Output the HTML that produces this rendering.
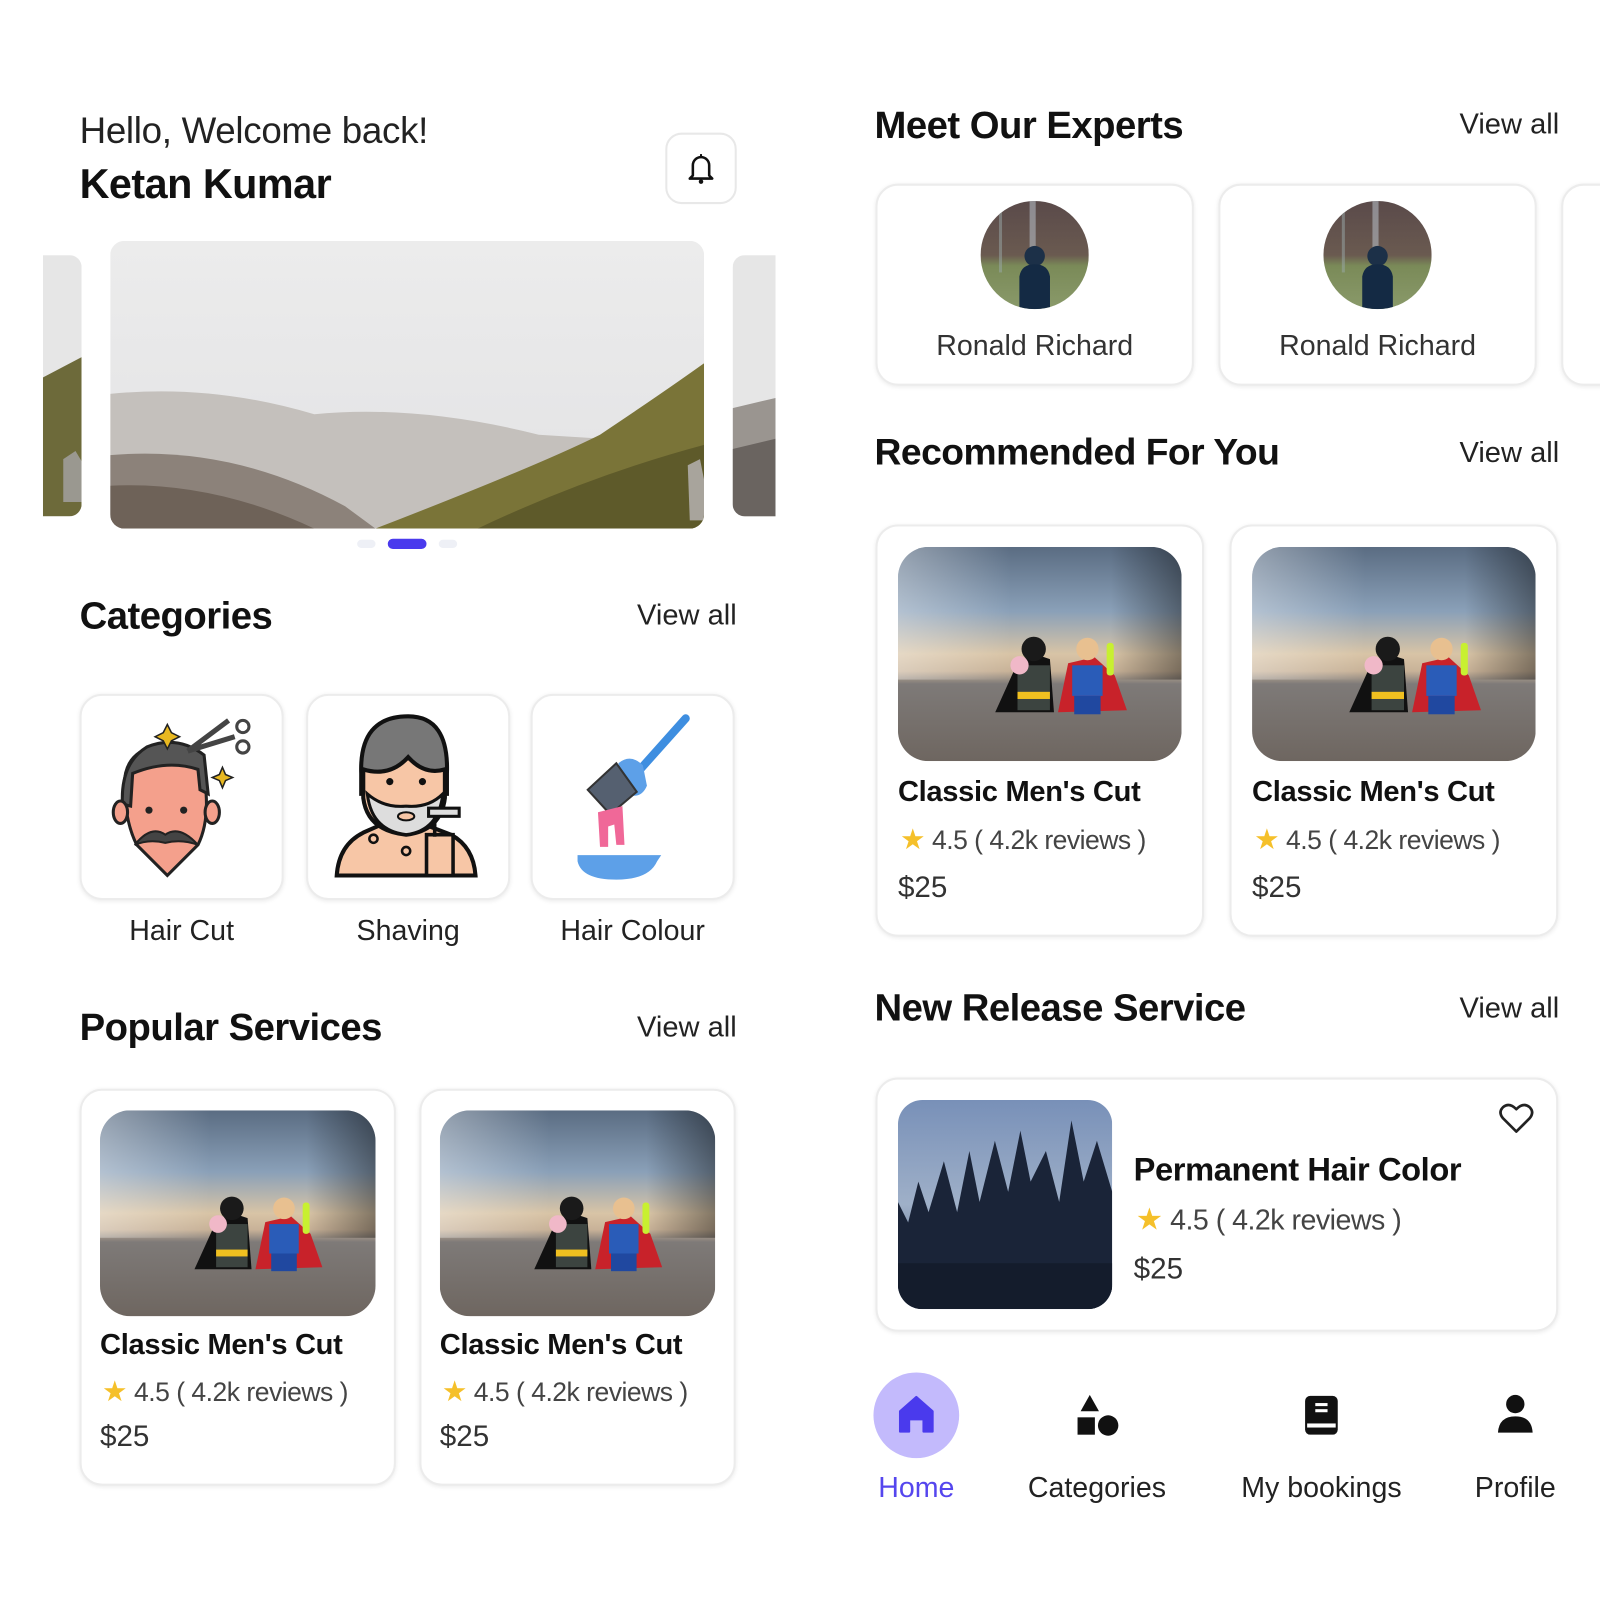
<!DOCTYPE html>
<html><head><meta charset="utf-8">
<style>
*{margin:0;padding:0;box-sizing:border-box}
html,body{width:1600px;height:1600px;background:#fff;overflow:hidden;font-family:"Liberation Sans",sans-serif;color:#111}
#w{position:absolute;left:0;top:0;width:1568px;height:1568px;transform:scale(1.0204);transform-origin:0 0}
.a{position:absolute}
.card{position:absolute;background:#fff;border:2px solid #ececec;border-radius:22px;box-shadow:0 1px 4px rgba(0,0,0,.08)}
.h{position:absolute;font-weight:bold;font-size:37.5px;letter-spacing:-0.5px;line-height:40px}
.va{position:absolute;font-size:28.5px;line-height:32px;color:#222;text-align:right}
.t{position:absolute;font-weight:bold;font-size:28.5px;line-height:32px;letter-spacing:-0.3px}
.r{position:absolute;font-size:26px;line-height:30px;color:#444;letter-spacing:-0.5px}
.r b{color:#f5c02a;font-size:28px;font-weight:normal}
.p{position:absolute;font-size:29px;line-height:32px;color:#333}
.img{position:absolute;overflow:hidden}
.img svg{width:100%;height:100%;display:block}
.lbl{position:absolute;font-size:28px;line-height:32px;text-align:center;color:#222}
</style></head><body>

<svg width="0" height="0" style="position:absolute">
<defs>
<linearGradient id="lg" x1="0" y1="0" x2="0" y2="1">
<stop offset="0" stop-color="#5a6c82"/><stop offset=".3" stop-color="#8aa0b8"/><stop offset=".5" stop-color="#d8c4a6"/><stop offset=".58" stop-color="#c8b298"/><stop offset=".64" stop-color="#7e7a78"/><stop offset="1" stop-color="#6e6660"/></linearGradient>
<linearGradient id="lh" x1="0" y1="0" x2="1" y2="0">
<stop offset="0" stop-color="#fff" stop-opacity=".35"/><stop offset=".4" stop-color="#fff" stop-opacity="0"/><stop offset=".75" stop-color="#000" stop-opacity="0"/><stop offset="1" stop-color="#000" stop-opacity=".4"/></linearGradient>
<symbol id="lego" viewBox="0 0 280 210" preserveAspectRatio="none">
<rect width="280" height="210" fill="url(#lg)"/>
<rect width="280" height="130" fill="url(#lh)"/>
<path d="M96 162 L116 118 L132 104 L150 110 L154 162Z" fill="#111"/>
<rect x="118" y="116" width="32" height="44" fill="#3c4440"/>
<rect x="118" y="142" width="32" height="7" fill="#f0c020"/>
<circle cx="134" cy="100" r="12" fill="#1a1a1a"/>
<circle cx="120" cy="116" r="9" fill="#f0b8c8"/>
<path d="M158 162 L168 114 L194 108 L214 126 L226 160Z" fill="#c8222a"/>
<rect x="172" y="116" width="30" height="30" fill="#2a5cb8"/>
<rect x="174" y="146" width="26" height="18" fill="#2048a0"/>
<circle cx="187" cy="100" r="11" fill="#e8c090"/>
<rect x="206" y="94" width="7" height="32" rx="3" fill="#c8f030"/>
</symbol>
</defs></svg>

<div id="w">
<!-- LEFT -->
<div class="a" style="left:78px;top:109px;font-size:36px;line-height:38px;color:#222;letter-spacing:-0.3px">Hello, Welcome back!</div>
<div class="a" style="left:78px;top:158px;font-size:40.5px;line-height:44px;font-weight:bold;letter-spacing:-0.5px">Ketan Kumar</div>
<div class="a" style="left:652px;top:130px;width:70px;height:70px;border:2px solid #e8e8e8;border-radius:16px"></div>
<svg class="a" style="left:671px;top:148px" width="32" height="34" viewBox="0 0 32 34"><path d="M8 24 V14 a8 8 0 0 1 16 0 V24 l3 3 H5z" fill="none" stroke="#111" stroke-width="2.5" stroke-linejoin="round"/><circle cx="16" cy="30" r="2.2" fill="#111"/><rect x="15" y="3" width="2" height="3" fill="#111"/></svg>

<div class="img" style="left:42px;top:250px;width:38px;height:256px;border-radius:0 12px 12px 0">
<svg viewBox="0 0 38 256" preserveAspectRatio="none"><rect width="38" height="256" fill="#e6e6e6"/><path d="M0 120 L38 100 V256 H0Z" fill="#6d6a3a"/><path d="M20 200 l12 -8 l6 10 v40 h-18z" fill="#9a9890"/></svg></div>
<div class="img" style="left:718px;top:250px;width:42px;height:256px;border-radius:12px 0 0 12px">
<svg viewBox="0 0 42 256" preserveAspectRatio="none"><rect width="42" height="256" fill="#e6e6e6"/><path d="M0 150 L42 140 V256 H0Z" fill="#9a9590"/><path d="M0 190 L42 180 V256 H0Z" fill="#6a6460"/></svg></div>
<div class="img" style="left:108px;top:236px;width:582px;height:282px;border-radius:14px">
<svg viewBox="0 0 582 282" preserveAspectRatio="none">
<defs><linearGradient id="sky" x1="0" y1="0" x2="0" y2="1"><stop offset="0" stop-color="#ececec"/><stop offset="1" stop-color="#e2e2e4"/></linearGradient></defs>
<rect width="582" height="282" fill="url(#sky)"/>
<path d="M0 150 Q100 140 200 170 Q300 160 420 190 L582 200 V282 H0Z" fill="#c4c0bc"/>
<path d="M0 210 Q120 200 230 260 L260 282 H0Z" fill="#8c827a"/>
<path d="M0 240 Q100 235 200 282 H0Z" fill="#6e6258"/>
<path d="M260 282 Q420 220 480 190 Q540 150 582 120 V282Z" fill="#7a7438"/>
<path d="M360 282 Q470 230 582 200 V282Z" fill="#5e5a2a"/>
<path d="M566 220 l12 -6 l4 20 v40 h-14z" fill="#a8a49c"/>
</svg></div>
<div class="a" style="left:350px;top:529px;width:18px;height:8px;border-radius:4px;background:#eef0f6"></div>
<div class="a" style="left:380px;top:528px;width:38px;height:10px;border-radius:5px;background:#4a3aed"></div>
<div class="a" style="left:430px;top:529px;width:18px;height:8px;border-radius:4px;background:#eef0f6"></div>

<div class="h" style="left:78px;top:583px">Categories</div>
<div class="va" style="right:846px;top:587px">View all</div>

<div class="card" style="left:78px;top:680px;width:200px;height:202px"></div>
<div class="card" style="left:300px;top:680px;width:200px;height:202px"></div>
<div class="card" style="left:520px;top:680px;width:200px;height:202px"></div>
<svg class="a" style="left:104px;top:698px" width="150" height="166" viewBox="0 0 150 166">
<path d="M18 70 Q18 40 50 32 Q80 28 96 50 L98 80 Q100 110 90 130 L60 160 L30 130 Q20 110 18 80Z" fill="#f4a08c" stroke="#222" stroke-width="3"/>
<path d="M16 90 Q14 50 40 34 Q70 22 96 42 L100 80 L92 76 L90 56 Q60 46 26 60 L24 92Z" fill="#555" stroke="#222" stroke-width="3"/>
<ellipse cx="14" cy="98" rx="7" ry="11" fill="#f4a08c" stroke="#222" stroke-width="3"/>
<ellipse cx="104" cy="98" rx="7" ry="11" fill="#f4a08c" stroke="#222" stroke-width="3"/>
<circle cx="42" cy="96" r="3.5" fill="#222"/><circle cx="76" cy="96" r="3.5" fill="#222"/>
<path d="M28 130 Q44 110 58 120 Q72 110 90 130 Q74 124 58 128 Q42 124 28 130Z" fill="#444" stroke="#222" stroke-width="2"/>
<path d="M80 38 L120 8 M80 38 L126 24" stroke="#444" stroke-width="5"/>
<circle cx="134" cy="14" r="6" fill="none" stroke="#444" stroke-width="3"/><circle cx="134" cy="34" r="6" fill="none" stroke="#444" stroke-width="3"/>
<path d="M60 12 l4 8 l8 4 l-8 4 l-4 8 l-4 -8 l-8 -4 l8 -4z" fill="#e8b820" stroke="#222" stroke-width="1.5"/>
<path d="M114 54 l3 7 l7 3 l-7 3 l-3 7 l-3 -7 l-7 -3 l7 -3z" fill="#e8b820" stroke="#222" stroke-width="1.5"/>
</svg>
<svg class="a" style="left:326px;top:698px" width="150" height="166" viewBox="0 0 150 166">
<path d="M4 160 Q6 130 30 118 L48 110 L90 110 L116 120 Q138 132 140 160Z" fill="#f7c6a6" stroke="#111" stroke-width="4"/>
<path d="M28 60 Q26 4 74 4 Q114 4 112 60 L112 80 L28 80Z" fill="#777" stroke="#111" stroke-width="4"/>
<path d="M30 56 Q56 64 74 44 Q90 62 110 56 L110 84 Q106 116 72 120 Q34 116 30 84Z" fill="#f7c6a6" stroke="#111" stroke-width="4"/>
<path d="M34 80 Q50 94 72 92 Q94 94 108 80 Q104 116 72 120 Q38 116 34 80Z" fill="#ddd" stroke="#111" stroke-width="3"/>
<ellipse cx="72" cy="102" rx="8" ry="4" fill="#f7c6a6" stroke="#111" stroke-width="2"/>
<circle cx="56" cy="68" r="3.5" fill="#111"/><circle cx="88" cy="68" r="3.5" fill="#111"/>
<circle cx="40" cy="124" r="4" fill="none" stroke="#111" stroke-width="2.5"/><circle cx="72" cy="136" r="4" fill="none" stroke="#111" stroke-width="2.5"/>
<rect x="94" y="94" width="30" height="8" fill="#ddd" stroke="#111" stroke-width="3"/>
<path d="M100 102 v20 M92 120 h26 v40 h-26z" fill="#f7c6a6" stroke="#111" stroke-width="3.5"/>
</svg>
<svg class="a" style="left:560px;top:698px" width="120" height="166" viewBox="0 0 120 166">
<path d="M112 6 L62 62" stroke="#3e8ee0" stroke-width="8" stroke-linecap="round"/>
<path d="M46 50 Q58 40 70 52 L74 72 Q68 86 54 80 Z" fill="#5da0e8"/>
<path d="M16 76 L44 50 L64 78 L38 100Z" fill="#556070" stroke="#333" stroke-width="2"/>
<path d="M26 98 L50 92 L52 130 L44 130 L42 110 L36 112 L36 132 L28 132Z" fill="#f06898"/>
<path d="M6 140 H88 L84 146 Q76 164 44 164 Q10 164 6 146Z" fill="#5da0e8"/>
</svg>
<div class="lbl" style="left:78px;top:896px;width:200px">Hair Cut</div>
<div class="lbl" style="left:300px;top:896px;width:200px">Shaving</div>
<div class="lbl" style="left:520px;top:896px;width:200px">Hair Colour</div>

<div class="h" style="left:78px;top:986px">Popular Services</div>
<div class="va" style="right:846px;top:991px">View all</div>

<div class="card" style="left:78px;top:1067px;width:310px;height:389px"></div>
<div class="card" style="left:411px;top:1067px;width:310px;height:389px"></div>
<div class="img" style="left:98px;top:1088px;width:270px;height:202px;border-radius:30px"><svg><use href="#lego"/></svg></div>
<div class="img" style="left:431px;top:1088px;width:270px;height:202px;border-radius:30px"><svg><use href="#lego"/></svg></div>
<div class="t" style="left:98px;top:1302px">Classic Men's Cut</div>
<div class="t" style="left:431px;top:1302px">Classic Men's Cut</div>
<div class="r" style="left:100px;top:1349px"><b>★</b> 4.5 ( 4.2k reviews )</div>
<div class="r" style="left:433px;top:1349px"><b>★</b> 4.5 ( 4.2k reviews )</div>
<div class="p" style="left:98px;top:1392px">$25</div>
<div class="p" style="left:431px;top:1392px">$25</div>

<!-- RIGHT -->
<div class="h" style="left:857px;top:102px">Meet Our Experts</div>
<div class="va" style="right:40px;top:106px">View all</div>
<div class="card" style="left:858px;top:180px;width:312px;height:198px"></div>
<div class="card" style="left:1194px;top:180px;width:312px;height:198px"></div>
<div class="card" style="left:1530px;top:180px;width:120px;height:198px"></div>
<svg class="a" style="left:961px;top:197px" width="106" height="106" viewBox="0 0 106 106"><defs><clipPath id="c1"><circle cx="53" cy="53" r="53"/></clipPath><linearGradient id="fo" x1="0" y1="0" x2="0" y2="1"><stop offset="0" stop-color="#5a4a4a"/><stop offset=".5" stop-color="#6a5a50"/><stop offset=".6" stop-color="#7a8a58"/><stop offset="1" stop-color="#8a9a6a"/></linearGradient></defs><g clip-path="url(#c1)"><rect width="106" height="106" fill="url(#fo)"/><rect x="48" y="0" width="6" height="60" fill="#b0b8c0" opacity=".6"/><rect x="18" y="10" width="3" height="60" fill="#9aa" opacity=".5"/><circle cx="53" cy="54" r="10" fill="#1c3048"/><path d="M38 106 V74 Q40 62 53 62 Q66 62 68 74 V106Z" fill="#142a44"/></g></svg>
<svg class="a" style="left:1297px;top:197px" width="106" height="106" viewBox="0 0 106 106"><g clip-path="url(#c1)"><rect width="106" height="106" fill="url(#fo)"/><rect x="48" y="0" width="6" height="60" fill="#b0b8c0" opacity=".6"/><rect x="18" y="10" width="3" height="60" fill="#9aa" opacity=".5"/><circle cx="53" cy="54" r="10" fill="#1c3048"/><path d="M38 106 V74 Q40 62 53 62 Q66 62 68 74 V106Z" fill="#142a44"/></g></svg>
<div class="lbl" style="left:858px;top:323px;width:312px;color:#333">Ronald Richard</div>
<div class="lbl" style="left:1194px;top:323px;width:312px;color:#333">Ronald Richard</div>

<div class="h" style="left:857px;top:423px;font-size:36.5px">Recommended For You</div>
<div class="va" style="right:40px;top:428px">View all</div>
<div class="card" style="left:858px;top:514px;width:322px;height:404px"></div>
<div class="card" style="left:1205px;top:514px;width:322px;height:404px"></div>
<div class="img" style="left:880px;top:536px;width:278px;height:210px;border-radius:30px"><svg><use href="#lego"/></svg></div>
<div class="img" style="left:1227px;top:536px;width:278px;height:210px;border-radius:30px"><svg><use href="#lego"/></svg></div>
<div class="t" style="left:880px;top:760px">Classic Men's Cut</div>
<div class="t" style="left:1227px;top:760px">Classic Men's Cut</div>
<div class="r" style="left:882px;top:808px"><b>★</b> 4.5 ( 4.2k reviews )</div>
<div class="r" style="left:1229px;top:808px"><b>★</b> 4.5 ( 4.2k reviews )</div>
<div class="p" style="left:880px;top:854px">$25</div>
<div class="p" style="left:1227px;top:854px">$25</div>

<div class="h" style="left:857px;top:967px">New Release Service</div>
<div class="va" style="right:40px;top:972px">View all</div>
<div class="card" style="left:858px;top:1056px;width:669px;height:249px"></div>
<div class="img" style="left:880px;top:1078px;width:210px;height:205px;border-radius:24px">
<svg viewBox="0 0 210 205" preserveAspectRatio="none"><defs><linearGradient id="fs" x1="0" y1="0" x2="0" y2="1"><stop offset="0" stop-color="#7890b8"/><stop offset=".5" stop-color="#9fb0c8"/><stop offset="1" stop-color="#405070"/></linearGradient></defs>
<rect width="210" height="205" fill="url(#fs)"/>
<path d="M0 205 V100 L10 120 L20 80 L30 110 L45 60 L58 110 L70 50 L80 100 L95 40 L108 90 L120 30 L130 80 L145 50 L158 100 L170 20 L182 80 L195 40 L210 90 V205Z" fill="#1a2438"/>
<rect y="160" width="210" height="45" fill="#141c2c"/></svg></div>
<div class="a" style="left:1111px;top:1128px;font-weight:bold;font-size:32px;line-height:36px;letter-spacing:-0.4px">Permanent Hair Color</div>
<div class="r" style="left:1113px;top:1181px;font-size:28px"><b style="font-size:30px">★</b> 4.5 ( 4.2k reviews )</div>
<div class="p" style="left:1111px;top:1228px">$25</div>
<svg class="a" style="left:1469px;top:1080px" width="34" height="32" viewBox="0 0 34 32"><path d="M17 29 L4 16 Q-1 10 4 5 Q10 0 17 7 Q24 0 30 5 Q35 10 30 16Z" fill="none" stroke="#222" stroke-width="2.6" stroke-linejoin="round"/></svg>

<!-- nav -->
<div class="a" style="left:856px;top:1345px;width:84px;height:84px;border-radius:50%;background:#c3bafc"></div>
<svg class="a" style="left:880px;top:1367px" width="36" height="38" viewBox="0 0 36 38"><path d="M2 16 L18 2 L34 16 V36 H25 V24 H11 V36 H2Z" fill="#4a3aed" stroke="#4a3aed" stroke-width="2" stroke-linejoin="round"/></svg>
<svg class="a" style="left:1055px;top:1365px" width="42" height="44" viewBox="0 0 42 44"><path d="M13 2 L22 18 H4Z" fill="#111"/><rect x="1" y="24" width="17" height="17" fill="#111"/><ellipse cx="31" cy="32" rx="10" ry="10" fill="#111"/></svg>
<svg class="a" style="left:1277px;top:1366px" width="36" height="42" viewBox="0 0 36 42"><rect x="2" y="2" width="32" height="38" rx="5" fill="#111"/><rect x="12" y="9" width="12" height="3" fill="#fff"/><rect x="12" y="15" width="12" height="3" fill="#fff"/><rect x="4" y="29" width="28" height="4" fill="#fff"/></svg>
<svg class="a" style="left:1467px;top:1366px" width="36" height="40" viewBox="0 0 36 40"><circle cx="18" cy="10" r="9" fill="#111"/><path d="M1 38 Q2 22 18 22 Q34 22 35 38Z" fill="#111"/></svg>
<div class="lbl" style="left:838px;top:1442px;width:120px;color:#5546ee">Home</div>
<div class="lbl" style="left:995px;top:1442px;width:160px">Categories</div>
<div class="lbl" style="left:1200px;top:1442px;width:190px">My bookings</div>
<div class="lbl" style="left:1430px;top:1442px;width:110px">Profile</div>
</div>
</body></html>
